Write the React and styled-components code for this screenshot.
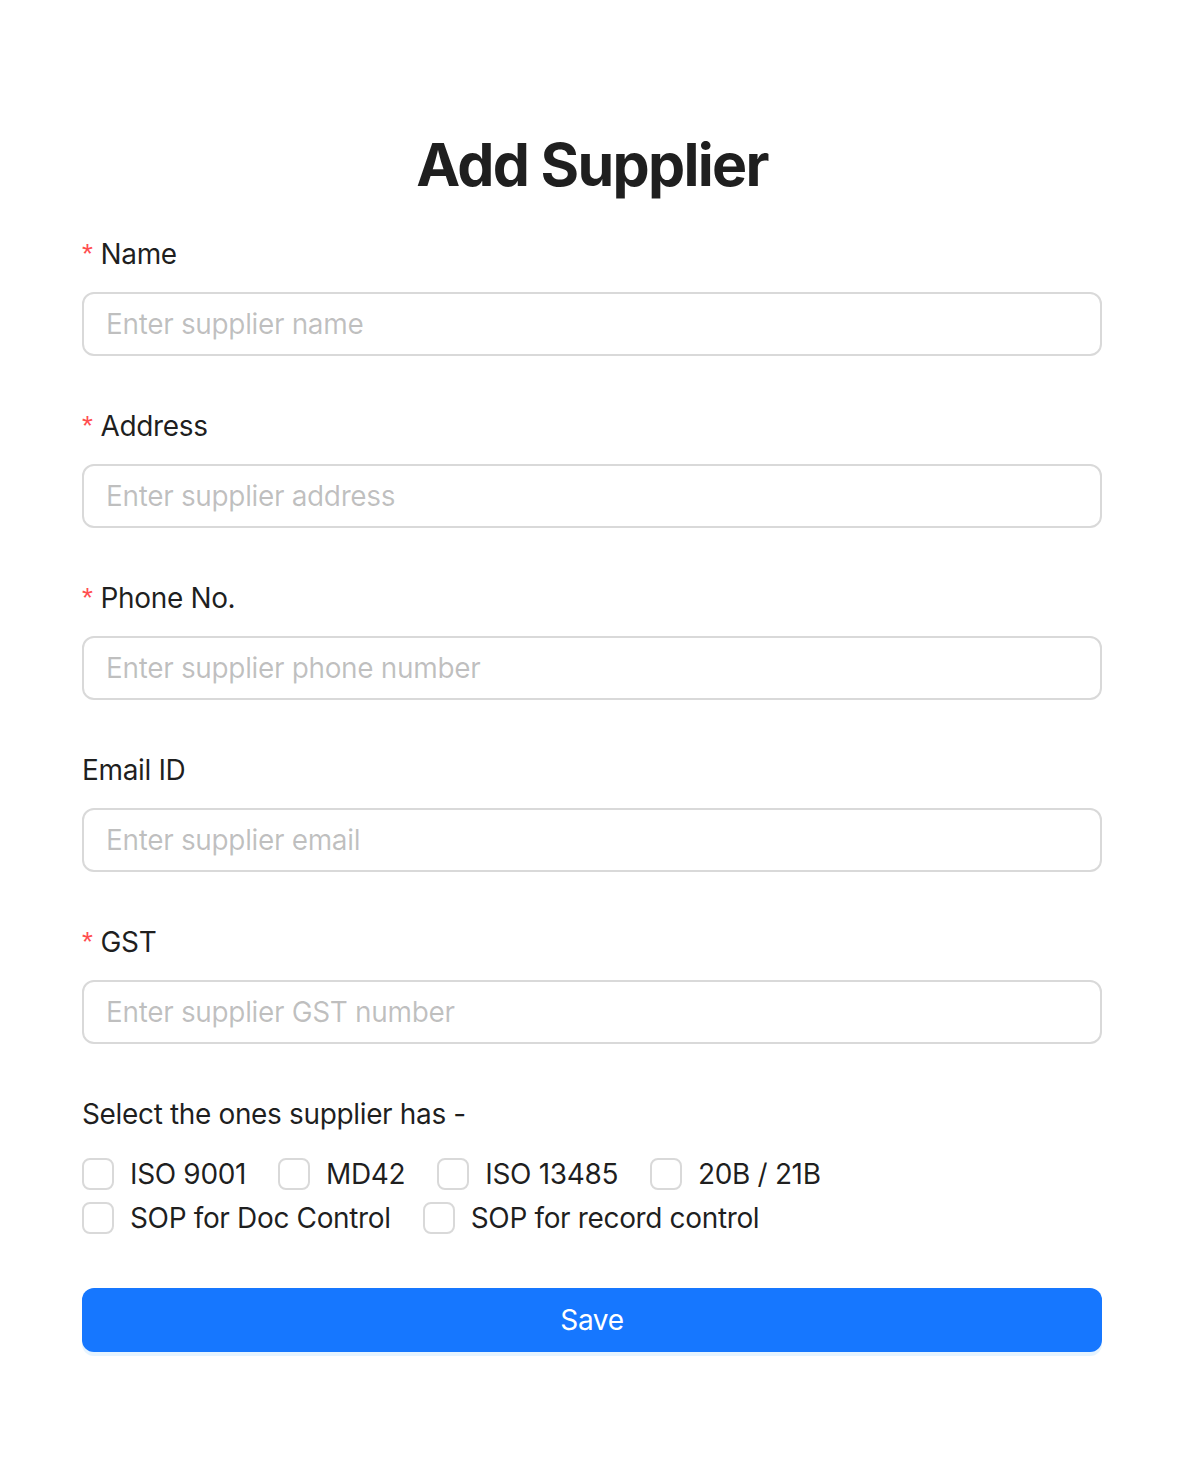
import React from "react";
import styled, { createGlobalStyle } from "styled-components";

const GlobalStyle = createGlobalStyle`
  html, body {
    margin: 0;
    padding: 0;
    background: #ffffff;
  }
  body {
    font-family: Inter, "Noto Sans", "Liberation Sans", sans-serif;
    color: rgba(0, 0, 0, 0.88);
  }
  * { box-sizing: border-box; }
`;

const Page = styled.div`
  width: 1184px;
  min-height: 1476px;
  padding: 125px 82px 0;
`;

const Title = styled.h2`
  margin: 0 0 27px;
  font-size: 59px;
  line-height: 80px;
  font-weight: 700;
  text-align: center;
  color: rgba(0, 0, 0, 0.88);
  letter-spacing: -1.7px;
`;

const Form = styled.form`
  display: flex;
  flex-direction: column;
  letter-spacing: -0.35px;
`;

const Item = styled.div`
  display: flex;
  flex-direction: column;
  margin-bottom: 48px;
`;

const Label = styled.label`
  display: flex;
  align-items: center;
  height: 44px;
  margin-bottom: 16px;
  font-size: 28px;
  line-height: 44px;
  color: rgba(0, 0, 0, 0.88);
`;

const Star = styled.span`
  color: #ff4d4f;
  font-size: 28px;
  font-family: SimSun, "Liberation Sans", sans-serif;
  margin-right: 8px;
  line-height: 1;
`;

const Input = styled.input`
  width: 100%;
  height: 64px;
  padding: 8px 22px;
  border: 2px solid #d9d9d9;
  border-radius: 12px;
  font-family: inherit;
  font-size: 28px;
  letter-spacing: inherit;
  color: rgba(0, 0, 0, 0.88);
  outline: none;
  &::placeholder {
    color: rgba(0, 0, 0, 0.25);
  }
`;

const CheckGroup = styled.div`
  display: flex;
  flex-direction: column;
`;

const CheckRow = styled.div`
  display: flex;
`;

const CheckWrap = styled.label`
  display: inline-flex;
  align-items: center;
  height: 44px;
  margin-right: 16px;
  font-size: 28px;
  color: rgba(0, 0, 0, 0.88);
  cursor: pointer;
`;

const Box = styled.span`
  width: 32px;
  height: 32px;
  border: 2px solid #d9d9d9;
  border-radius: 8px;
  background: #fff;
  flex-shrink: 0;
`;

const CheckText = styled.span`
  padding: 0 16px;
`;

const Button = styled.button`
  width: 100%;
  height: 64px;
  border: none;
  border-radius: 12px;
  background: #1677ff;
  color: #fff;
  font-family: inherit;
  font-size: 28px;
  letter-spacing: inherit;
  box-shadow: 0 4px 0 rgba(5, 145, 255, 0.1);
  cursor: pointer;
`;

const fields = [
  { label: "Name", placeholder: "Enter supplier name", required: true },
  { label: "Address", placeholder: "Enter supplier address", required: true },
  { label: "Phone No.", placeholder: "Enter supplier phone number", required: true },
  { label: "Email ID", placeholder: "Enter supplier email", required: false },
  { label: "GST", placeholder: "Enter supplier GST number", required: true },
];

const rows = [
  ["ISO 9001", "MD42", "ISO 13485", "20B / 21B"],
  ["SOP for Doc Control", "SOP for record control"],
];

function App() {
  return (
    <Page>
      <GlobalStyle />
      <Title>Add Supplier</Title>
      <Form onSubmit={(e) => e.preventDefault()}>
        {fields.map((f) => (
          <Item key={f.label}>
            <Label>
              {f.required && <Star>*</Star>}
              {f.label}
            </Label>
            <Input placeholder={f.placeholder} />
          </Item>
        ))}
        <Item>
          <Label>Select the ones supplier has -</Label>
          <CheckGroup>
            {rows.map((row, i) => (
              <CheckRow key={i}>
                {row.map((opt) => (
                  <CheckWrap key={opt}>
                    <Box />
                    <CheckText>{opt}</CheckText>
                  </CheckWrap>
                ))}
              </CheckRow>
            ))}
          </CheckGroup>
        </Item>
        <Button type="submit">Save</Button>
      </Form>
    </Page>
  );
}

export default App;
